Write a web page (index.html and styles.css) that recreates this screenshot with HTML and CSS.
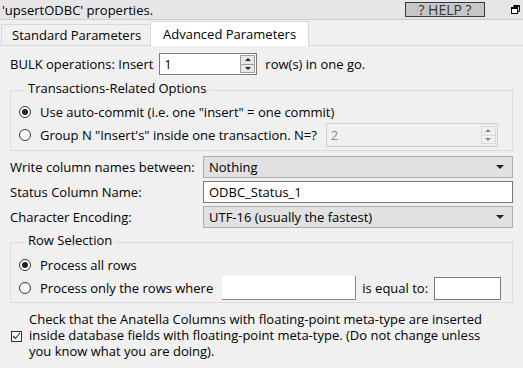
FILE: index.html
```html
<!DOCTYPE html>
<html>
<head>
    <title>'upsertODBC' properties.</title>
    <meta charset="UTF-8">
    <link rel="stylesheet" href="styles.css">
</head>
<body>
    <div class="titlebar">
        <span class="title">'upsertODBC' properties.</span>
        <button class="help">? HELP ?</button>
        <svg class="restore" width="9" height="9" viewBox="0 0 9 9">
            <path d="M2.5 0.5h6v6h-2" fill="none" stroke="#000"/>
            <path d="M2.5 1.5h6" stroke="#000"/>
            <rect x="0.5" y="2.5" width="6" height="6" fill="#fff" stroke="#000"/>
            <path d="M0.5 3.5h6" stroke="#000"/>
        </svg>
    </div>

    <div class="tabs">
        <div class="tab tab-standard">Standard Parameters</div>
        <div class="tab tab-advanced active">Advanced Parameters</div>
    </div>

    <div class="panel">
        <div class="bulk-row">
            <span>BULK operations: Insert</span>
            <div class="spin spin-bulk">
                <span class="spin-value">1</span>
                <span class="spin-buttons"><span class="up"></span><span class="down"></span></span>
            </div>
            <span>row(s) in one go.</span>
        </div>

        <fieldset class="group">
            <legend>Transactions-Related Options</legend>
            <div class="option-row">
                <span class="radio checked"></span>
                <span>Use auto-commit (i.e. one "insert" = one commit)</span>
            </div>
            <div class="option-row tall">
                <span class="radio"></span>
                <span>Group N "Insert's" inside one transaction. N=?</span>
                <div class="spin spin-group disabled">
                    <span class="spin-value">2</span>
                    <span class="spin-buttons"><span class="up"></span><span class="down"></span></span>
                </div>
            </div>
        </fieldset>

        <div class="form-rows">
            <div class="form-row">
                <label>Write column names between:</label>
                <div class="combo">Nothing<span class="arrow"></span></div>
            </div>
            <div class="form-row">
                <label>Status Column Name:</label>
                <div class="text-input">ODBC_Status_1</div>
            </div>
            <div class="form-row">
                <label>Character Encoding:</label>
                <div class="combo">UTF-16 (usually the fastest)<span class="arrow"></span></div>
            </div>
        </div>

        <fieldset class="group group-rows">
            <legend>Row Selection</legend>
            <div class="option-row">
                <span class="radio checked"></span>
                <span>Process all rows</span>
            </div>
            <div class="option-row tall">
                <span class="radio"></span>
                <span>Process only the rows where</span>
                <div class="column-field"></div>
                <span class="equal-label">is equal to:</span>
                <div class="equal-field"></div>
            </div>
        </fieldset>

        <div class="check-row">
            <span class="checkbox">
                <svg width="9" height="8" viewBox="0 0 9 8"><path d="M1 4l2.5 2.5L8 1" fill="none" stroke="#222" stroke-width="1.1"/></svg>
            </span>
            <span class="check-text">Check that the Anatella Columns with floating-point meta-type are inserted inside database fields with floating-point meta-type. (Do not change unless you know what you are doing).</span>
        </div>
    </div>
</body>
</html>
```

FILE: styles.css
```css
* {
    box-sizing: border-box;
}

body {
    margin: 0;
    width: 523px;
    height: 368px;
    overflow: hidden;
    font-family: "Open Sans", "Liberation Sans", Arial, sans-serif;
    font-size: 13px;
    color: #000;
    background-color: #f0f0f0;
}

.titlebar {
    display: flex;
    align-items: center;
    height: 20px;
    padding-left: 2px;
    background-color: #e6e6e6;
    border-bottom: 1px solid #cdcdcd;
}

.help {
    margin-left: auto;
    width: 80px;
    height: 15px;
    padding: 0;
    font-family: inherit;
    font-size: 14px;
    line-height: 13px;
    color: #333;
    background-color: #c6c6c6;
    border: 1px solid #3a3a3a;
}

.restore {
    margin: 0 3px 0 26px;
}

.tabs {
    display: flex;
    align-items: flex-end;
    height: 26px;
    padding-left: 1px;
    border-bottom: 1px solid #d9d9d9;
}

.tab {
    display: flex;
    align-items: center;
    height: 21px;
    border: 1px solid #d9d9d9;
    border-bottom: none;
    background-color: #f0f0f0;
}

.tab-standard {
    width: 149px;
    padding-left: 10px;
    border-right: none;
}

.tab.active {
    width: 159px;
    height: 25px;
    padding-left: 12px;
    margin-bottom: -1px;
    background-color: #fff;
}

.panel {
    padding: 7px 10px 0 10px;
}

.bulk-row {
    display: flex;
    align-items: center;
    height: 22px;
}

.spin {
    display: flex;
    align-items: center;
    height: 22px;
    background-color: #fff;
    border: 1px solid #7a7a7a;
}

.spin-bulk {
    width: 98px;
    margin: 0 8px 0 6px;
}

.spin-value {
    flex: 1;
    padding-left: 4px;
}

.spin-buttons {
    display: flex;
    flex-direction: column;
    width: 15px;
    height: 18px;
    margin-right: 1px;
    border: 1px solid #a0a0a0;
    background-color: #e8e8e8;
}

.spin-buttons span {
    flex: 1;
    display: flex;
    align-items: center;
    justify-content: center;
}

.spin-buttons .up {
    border-bottom: 1px solid #a0a0a0;
}

.spin-buttons .up::after,
.spin-buttons .down::after {
    content: "";
    border-left: 3px solid transparent;
    border-right: 3px solid transparent;
}

.spin-buttons .up::after {
    border-bottom: 3px solid #222;
}

.spin-buttons .down::after {
    border-top: 3px solid #222;
}

.spin.disabled {
    color: #8a8a8a;
    background-color: #f0f0f0;
    border-color: #cfcfcf;
}

.spin.disabled .spin-buttons {
    border-color: #dadada;
    background-color: #f0f0f0;
}

.spin.disabled .spin-buttons .up {
    border-bottom-color: #dadada;
}

.spin.disabled .up::after {
    border-bottom-color: #8a8a8a;
}

.spin.disabled .down::after {
    border-top-color: #8a8a8a;
}

.spin-group {
    width: 172px;
    height: 24px;
    margin-left: 9px;
}

.group {
    width: 503px;
    margin: 5px 0 0 0;
    padding: 1px 0 3px 8px;
    border: 1px solid #dcdcdc;
    min-width: 0;
}

.group legend {
    margin-left: 6px;
    padding: 0 3px 4px 3px;
    line-height: 16px;
}

.option-row {
    display: flex;
    align-items: center;
    height: 22px;
}

.option-row.tall {
    height: 24px;
}

.radio {
    position: relative;
    flex: none;
    width: 12px;
    height: 12px;
    margin-right: 9px;
    border: 1px solid #333;
    border-radius: 50%;
    background-color: #fff;
}

.radio.checked::after {
    content: "";
    position: absolute;
    left: 2px;
    top: 2px;
    width: 6px;
    height: 6px;
    border-radius: 50%;
    background-color: #222;
}

.form-rows {
    display: flex;
    flex-direction: column;
    gap: 3px;
    margin-top: 5px;
}

.form-row {
    display: flex;
    align-items: center;
    height: 22px;
}

.form-row label {
    width: 193px;
}

.combo,
.text-input {
    display: flex;
    align-items: center;
    width: 310px;
    height: 22px;
    padding-left: 5px;
}

.combo {
    background-color: #e1e1e1;
    border: 1px solid #adadad;
}

.combo .arrow {
    margin-left: auto;
    margin-right: 8px;
    border-left: 4px solid transparent;
    border-right: 4px solid transparent;
    border-top: 4px solid #222;
}

.text-input {
    background-color: #fff;
    border: 1px solid #7a7a7a;
}

.group-rows {
    margin-top: 4px;
    padding: 2px 0 2px 8px;
}

.column-field {
    width: 134px;
    height: 24px;
    margin-left: 9px;
    background-color: #fff;
    border-right: 1px solid #8a8a8a;
    border-bottom: 1px solid #8a8a8a;
}

.equal-label {
    margin-left: 6px;
}

.equal-field {
    width: 67px;
    height: 23px;
    margin-left: 6px;
    background-color: #fff;
    border: 1px solid #7a7a7a;
}

.check-row {
    display: flex;
    align-items: center;
    margin-top: 8px;
}

.checkbox {
    display: flex;
    align-items: center;
    justify-content: center;
    flex: none;
    width: 11px;
    height: 11px;
    margin: 2px 7px 0 1px;
    border: 1px solid #333;
    background-color: #fff;
}

.check-text {
    width: 470px;
    line-height: 16px;
}
```
